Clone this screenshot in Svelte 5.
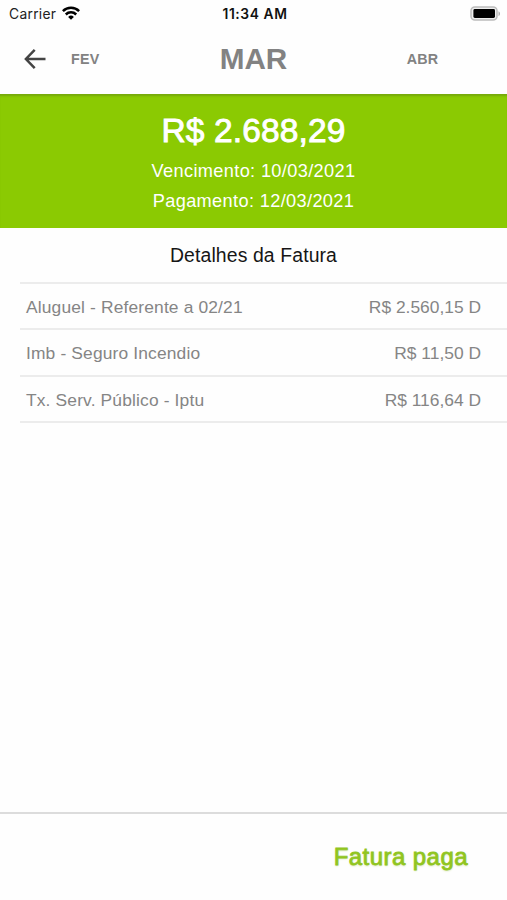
<script lang="ts">
    const months = { previous: 'FEV', current: 'MAR', next: 'ABR' };

    const invoice = {
        total: 'R$ 2.688,29',
        dueDate: '10/03/2021',
        paymentDate: '12/03/2021',
        status: 'Fatura paga'
    };

    const items = [
        { name: 'Aluguel - Referente a 02/21', amount: 'R$ 2.560,15 D' },
        { name: 'Imb - Seguro Incendio', amount: 'R$ 11,50 D' },
        { name: 'Tx. Serv. Público - Iptu', amount: 'R$ 116,64 D' }
    ];
</script>

<div class="screen">
    <div class="status-bar">
        <div class="carrier">
            <span>Carrier</span>
            <svg class="wifi" width="18" height="14" viewBox="0 0 18 14" fill="none" stroke="#000" stroke-width="2.5">
                <path d="M0.9 5.2a11.5 11.5 0 0 1 16.2 0" />
                <path d="M3.8 8.5a7.4 7.4 0 0 1 10.4 0" />
                <path d="M9 13.8 6.1 10.9a4.1 4.1 0 0 1 5.8 0Z" fill="#000" stroke="none" />
            </svg>
        </div>
        <div class="clock">11:34 AM</div>
        <svg class="battery" width="31" height="15" viewBox="0 0 31 15">
            <rect x="1" y="1" width="26" height="13" rx="3.8" fill="#eee" stroke="#bcbcbc" stroke-width="1.5" />
            <rect x="3.4" y="3" width="21.6" height="9" rx="1.4" fill="#000" />
            <path d="M28.5 5.2c2 .7 2 4.1 0 4.8Z" fill="#b0b0b0" />
        </svg>
    </div>

    <nav class="months">
        <button class="back" aria-label="Voltar">
            <svg width="22" height="20" viewBox="0 0 22 20" fill="none" stroke="#444" stroke-width="2.5">
                <path d="M21.5 10H2M10.7 0.9 1.9 10l8.8 9.1" />
            </svg>
        </button>
        <button class="month previous">{months.previous}</button>
        <h1>{months.current}</h1>
        <button class="month next">{months.next}</button>
    </nav>

    <section class="summary">
        <div class="total">{invoice.total}</div>
        <div class="date">Vencimento: {invoice.dueDate}</div>
        <div class="date">Pagamento: {invoice.paymentDate}</div>
    </section>

    <main>
        <h2>Detalhes da Fatura</h2>
        <ul>
            {#each items as item}
                <li>
                    <span>{item.name}</span>
                    <span class="amount">{item.amount}</span>
                </li>
            {/each}
        </ul>
    </main>

    <footer>
        <span class="paid">{invoice.status}</span>
    </footer>
</div>

<style>
    :global(body) {
        margin: 0;
        background: #fefefe;
    }

    .screen {
        display: flex;
        flex-direction: column;
        height: 900px;
        overflow: hidden;
        background: #fefefe;
        font-family: "Liberation Sans", Arial, sans-serif;
    }

    .status-bar {
        display: grid;
        grid-template-columns: 1fr auto 1fr;
        align-items: center;
        height: 27px;
        padding: 0 6px 0 9px;
        box-sizing: border-box;
        font-family: Inter, sans-serif;
        font-size: 13.8px;
        color: #222;
    }

    .carrier {
        display: flex;
        align-items: center;
        gap: 6px;
        letter-spacing: 0.3px;
    }

    .wifi {
        margin-top: -2px;
    }

    .clock {
        font-weight: 600;
        letter-spacing: 0.6px;
        color: #111;
    }

    .battery {
        justify-self: end;
    }

    .months {
        display: grid;
        grid-template-columns: 71px 98px 1fr 169px;
        align-items: center;
        height: 67px;
        padding-bottom: 3px;
        box-sizing: border-box;
        color: #828282;
    }

    button {
        border: 0;
        padding: 0;
        background: none;
        color: inherit;
        font: inherit;
    }

    .back {
        display: flex;
        padding-left: 24px;
    }

    .month {
        margin-top: -1px;
        font-size: 14.3px;
        font-weight: 700;
        letter-spacing: 0.2px;
    }

    .previous {
        text-align: left;
    }

    h1 {
        margin: -1px 0 0;
        text-align: center;
        font-size: 29.7px;
        line-height: 34px;
    }

    .summary {
        height: 134px;
        padding-top: 17px;
        box-sizing: border-box;
        background: #8bca02;
        box-shadow: inset 0 3px 2px -1px #76a90b;
        color: #fff;
        text-align: center;
    }

    .total {
        font-size: 33.5px;
        line-height: 40px;
        letter-spacing: 0.15px;
        -webkit-text-stroke: 0.9px currentColor;
        margin-bottom: 5px;
    }

    .date {
        font-size: 18.2px;
        line-height: 30px;
        letter-spacing: 0.35px;
    }

    main {
        flex: 1;
    }

    h2 {
        margin: 0;
        height: 54px;
        line-height: 54px;
        text-align: center;
        font-size: 19.4px;
        font-weight: 400;
        letter-spacing: 0.12px;
        color: #161616;
    }

    ul {
        margin: 0 0 0 20px;
        padding: 0;
        list-style: none;
        border-top: 2px solid #ececec;
    }

    li {
        display: flex;
        justify-content: space-between;
        height: 46.3px;
        padding: 0 26px 0 6px;
        box-sizing: border-box;
        border-bottom: 2px solid #ececec;
        font-size: 17.4px;
        line-height: 46px;
        letter-spacing: 0.15px;
        color: #858585;
    }

    .amount {
        letter-spacing: 0;
    }

    footer {
        height: 88px;
        padding-right: 39px;
        box-sizing: border-box;
        border-top: 2px solid #dcdcdc;
        text-align: right;
    }

    .paid {
        font-size: 24px;
        line-height: 85px;
        letter-spacing: 0.45px;
        color: #91c51f;
        -webkit-text-stroke: 0.8px currentColor;
        text-shadow: 0 1px 2px #cfe0a8;
    }
</style>
